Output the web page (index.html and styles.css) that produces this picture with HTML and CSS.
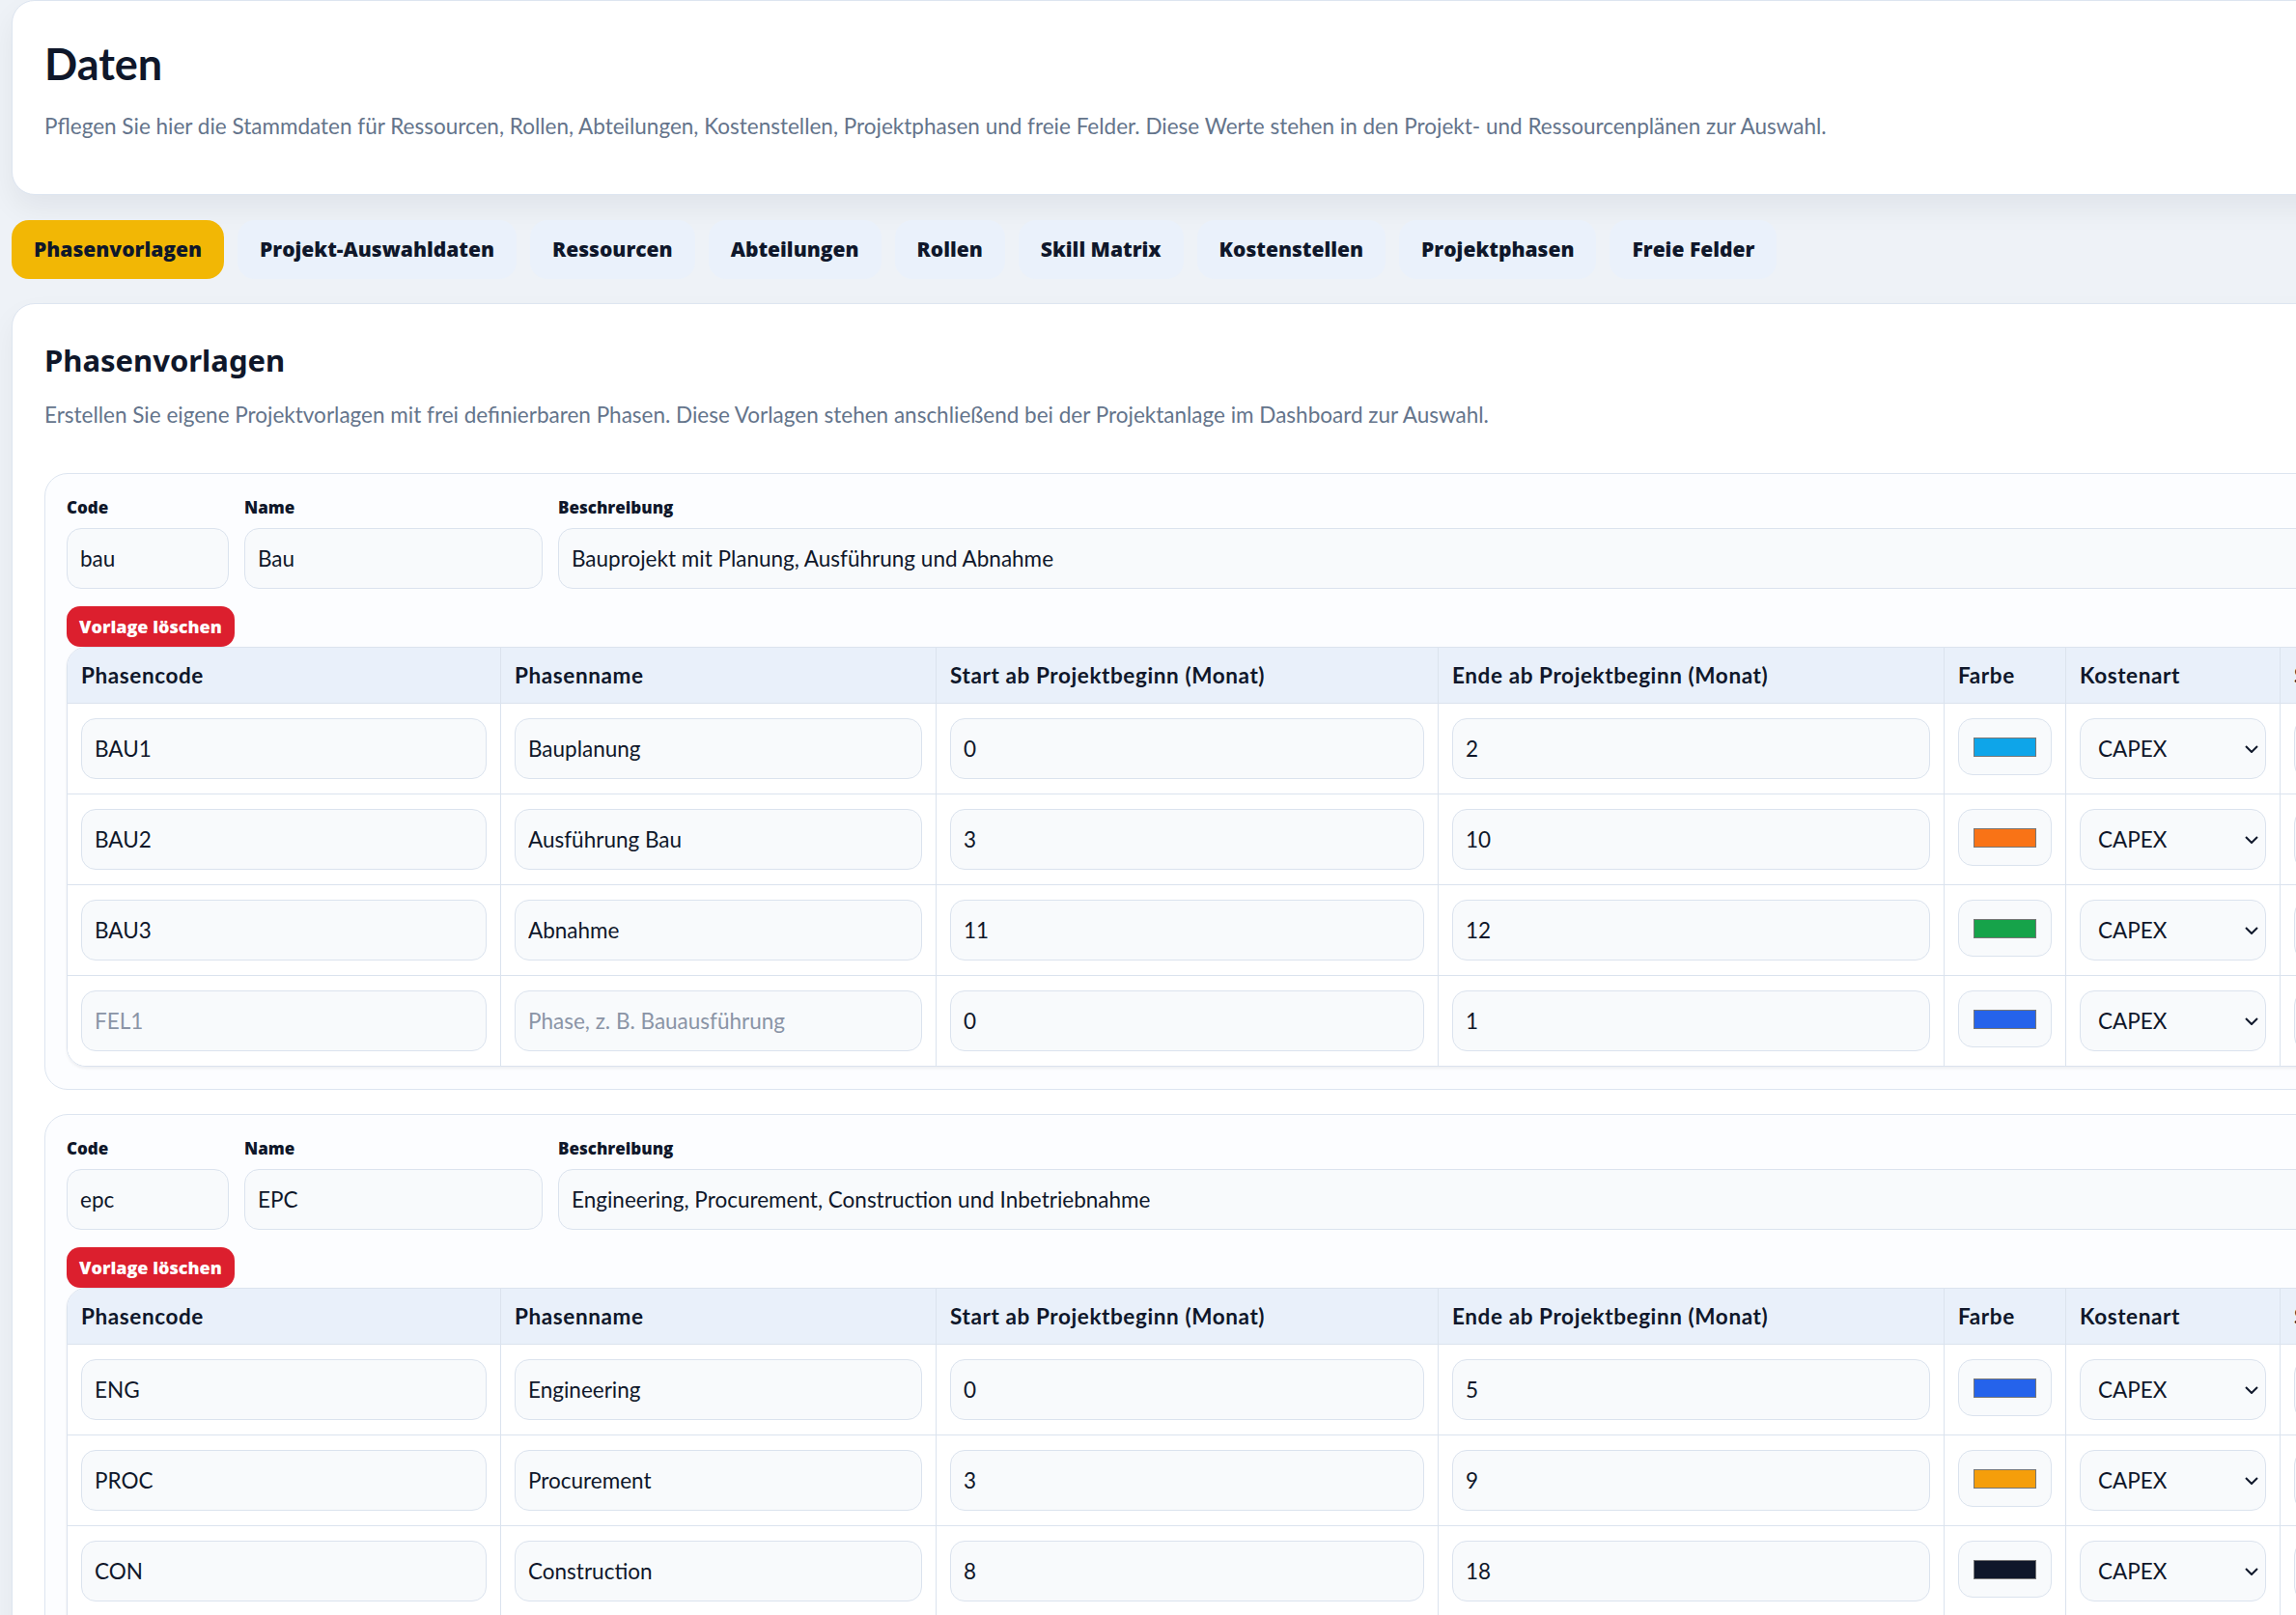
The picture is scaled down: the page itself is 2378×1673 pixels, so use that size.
FILE: index.html
```html
<!DOCTYPE html>
<html lang="de">
<head>
  <meta charset="UTF-8" />
  <meta name="viewport" content="width=device-width, initial-scale=1.0" />
  <title>Daten</title>
  <link rel="stylesheet" href="styles.css">
</head>
<body>
  <div class="page">
    <header class="intro">
      <h1>Daten</h1>
      <p>Pflegen Sie hier die Stammdaten für Ressourcen, Rollen, Abteilungen, Kostenstellen, Projektphasen und freie Felder. Diese Werte stehen in den Projekt- und Ressourcenplänen zur Auswahl.</p>
    </header>

    <nav class="tabs">
      <button type="button" class="tab active">Phasenvorlagen</button>
      <button type="button" class="tab">Projekt-Auswahldaten</button>
      <button type="button" class="tab">Ressourcen</button>
      <button type="button" class="tab">Abteilungen</button>
      <button type="button" class="tab">Rollen</button>
      <button type="button" class="tab">Skill Matrix</button>
      <button type="button" class="tab">Kostenstellen</button>
      <button type="button" class="tab">Projektphasen</button>
      <button type="button" class="tab">Freie Felder</button>
    </nav>

    <main class="panel">
      <h2>Phasenvorlagen</h2>
      <p class="lead">Erstellen Sie eigene Projektvorlagen mit frei definierbaren Phasen. Diese Vorlagen stehen anschließend bei der Projektanlage im Dashboard zur Auswahl.</p>

      <!-- Vorlage: Bau -->
      <section class="template">
        <div class="meta">
          <label class="field"><span>Code</span><input type="text" value="bau" /></label>
          <label class="field"><span>Name</span><input type="text" value="Bau" /></label>
          <label class="field"><span>Beschreibung</span><input type="text" value="Bauprojekt mit Planung, Ausführung und Abnahme" /></label>
        </div>
        <button type="button" class="btn-danger">Vorlage löschen</button>
        <table class="phases">
          <colgroup>
            <col class="c-code"><col class="c-name"><col class="c-start"><col class="c-end">
            <col class="c-color"><col class="c-cost"><col class="c-status"><col class="c-action">
          </colgroup>
          <thead>
            <tr>
              <th>Phasencode</th><th>Phasenname</th><th>Start ab Projektbeginn (Monat)</th><th>Ende ab Projektbeginn (Monat)</th>
              <th>Farbe</th><th>Kostenart</th><th>Status</th><th>Aktion</th>
            </tr>
          </thead>
          <tbody>
            <tr>
              <td><input type="text" value="BAU1" /></td>
              <td><input type="text" value="Bauplanung" /></td>
              <td><input type="number" value="0" /></td>
              <td><input type="number" value="2" /></td>
              <td><input type="color" class="swatch" value="#0ea5e9" /></td>
              <td><div class="select"><select><option>CAPEX</option><option>OPEX</option></select><svg viewBox="0 0 14 8"><path d="M1 1l6 6 6-6" /></svg></div></td>
              <td><div class="select"><select><option>Aktiv</option><option>Inaktiv</option></select><svg viewBox="0 0 14 8"><path d="M1 1l6 6 6-6" /></svg></div></td>
              <td><button type="button" class="btn-row">Entfernen</button></td>
            </tr>
            <tr>
              <td><input type="text" value="BAU2" /></td>
              <td><input type="text" value="Ausführung Bau" /></td>
              <td><input type="number" value="3" /></td>
              <td><input type="number" value="10" /></td>
              <td><input type="color" class="swatch" value="#f97316" /></td>
              <td><div class="select"><select><option>CAPEX</option><option>OPEX</option></select><svg viewBox="0 0 14 8"><path d="M1 1l6 6 6-6" /></svg></div></td>
              <td><div class="select"><select><option>Aktiv</option><option>Inaktiv</option></select><svg viewBox="0 0 14 8"><path d="M1 1l6 6 6-6" /></svg></div></td>
              <td><button type="button" class="btn-row">Entfernen</button></td>
            </tr>
            <tr>
              <td><input type="text" value="BAU3" /></td>
              <td><input type="text" value="Abnahme" /></td>
              <td><input type="number" value="11" /></td>
              <td><input type="number" value="12" /></td>
              <td><input type="color" class="swatch" value="#16a34a" /></td>
              <td><div class="select"><select><option>CAPEX</option><option>OPEX</option></select><svg viewBox="0 0 14 8"><path d="M1 1l6 6 6-6" /></svg></div></td>
              <td><div class="select"><select><option>Aktiv</option><option>Inaktiv</option></select><svg viewBox="0 0 14 8"><path d="M1 1l6 6 6-6" /></svg></div></td>
              <td><button type="button" class="btn-row">Entfernen</button></td>
            </tr>
            <tr>
              <td><input type="text" placeholder="FEL1" /></td>
              <td><input type="text" placeholder="Phase, z. B. Bauausführung" /></td>
              <td><input type="number" value="0" /></td>
              <td><input type="number" value="1" /></td>
              <td><input type="color" class="swatch" value="#2563eb" /></td>
              <td><div class="select"><select><option>CAPEX</option><option>OPEX</option></select><svg viewBox="0 0 14 8"><path d="M1 1l6 6 6-6" /></svg></div></td>
              <td><div class="select"><select><option>Aktiv</option><option>Inaktiv</option></select><svg viewBox="0 0 14 8"><path d="M1 1l6 6 6-6" /></svg></div></td>
              <td><button type="button" class="btn-row">Hinzufügen</button></td>
            </tr>
          </tbody>
        </table>
      </section>

      <!-- Vorlage: EPC -->
      <section class="template">
        <div class="meta">
          <label class="field"><span>Code</span><input type="text" value="epc" /></label>
          <label class="field"><span>Name</span><input type="text" value="EPC" /></label>
          <label class="field"><span>Beschreibung</span><input type="text" value="Engineering, Procurement, Construction und Inbetriebnahme" /></label>
        </div>
        <button type="button" class="btn-danger">Vorlage löschen</button>
        <table class="phases">
          <colgroup>
            <col class="c-code"><col class="c-name"><col class="c-start"><col class="c-end">
            <col class="c-color"><col class="c-cost"><col class="c-status"><col class="c-action">
          </colgroup>
          <thead>
            <tr>
              <th>Phasencode</th><th>Phasenname</th><th>Start ab Projektbeginn (Monat)</th><th>Ende ab Projektbeginn (Monat)</th>
              <th>Farbe</th><th>Kostenart</th><th>Status</th><th>Aktion</th>
            </tr>
          </thead>
          <tbody>
            <tr>
              <td><input type="text" value="ENG" /></td>
              <td><input type="text" value="Engineering" /></td>
              <td><input type="number" value="0" /></td>
              <td><input type="number" value="5" /></td>
              <td><input type="color" class="swatch" value="#2563eb" /></td>
              <td><div class="select"><select><option>CAPEX</option><option>OPEX</option></select><svg viewBox="0 0 14 8"><path d="M1 1l6 6 6-6" /></svg></div></td>
              <td><div class="select"><select><option>Aktiv</option><option>Inaktiv</option></select><svg viewBox="0 0 14 8"><path d="M1 1l6 6 6-6" /></svg></div></td>
              <td><button type="button" class="btn-row">Entfernen</button></td>
            </tr>
            <tr>
              <td><input type="text" value="PROC" /></td>
              <td><input type="text" value="Procurement" /></td>
              <td><input type="number" value="3" /></td>
              <td><input type="number" value="9" /></td>
              <td><input type="color" class="swatch" value="#f59e0b" /></td>
              <td><div class="select"><select><option>CAPEX</option><option>OPEX</option></select><svg viewBox="0 0 14 8"><path d="M1 1l6 6 6-6" /></svg></div></td>
              <td><div class="select"><select><option>Aktiv</option><option>Inaktiv</option></select><svg viewBox="0 0 14 8"><path d="M1 1l6 6 6-6" /></svg></div></td>
              <td><button type="button" class="btn-row">Entfernen</button></td>
            </tr>
            <tr>
              <td><input type="text" value="CON" /></td>
              <td><input type="text" value="Construction" /></td>
              <td><input type="number" value="8" /></td>
              <td><input type="number" value="18" /></td>
              <td><input type="color" class="swatch" value="#0f172a" /></td>
              <td><div class="select"><select><option>CAPEX</option><option>OPEX</option></select><svg viewBox="0 0 14 8"><path d="M1 1l6 6 6-6" /></svg></div></td>
              <td><div class="select"><select><option>Aktiv</option><option>Inaktiv</option></select><svg viewBox="0 0 14 8"><path d="M1 1l6 6 6-6" /></svg></div></td>
              <td><button type="button" class="btn-row">Entfernen</button></td>
            </tr>
            <tr>
              <td><input type="text" value="COM" /></td>
              <td><input type="text" value="Inbetriebnahme" /></td>
              <td><input type="number" value="19" /></td>
              <td><input type="number" value="20" /></td>
              <td><input type="color" class="swatch" value="#16a34a" /></td>
              <td><div class="select"><select><option>CAPEX</option><option>OPEX</option></select><svg viewBox="0 0 14 8"><path d="M1 1l6 6 6-6" /></svg></div></td>
              <td><div class="select"><select><option>Aktiv</option><option>Inaktiv</option></select><svg viewBox="0 0 14 8"><path d="M1 1l6 6 6-6" /></svg></div></td>
              <td><button type="button" class="btn-row">Entfernen</button></td>
            </tr>
          </tbody>
        </table>
      </section>
    </main>
  </div>
</body>
</html>
```

FILE: styles.css
```css
:root {
  --ink: #0f172a;
  --muted: #64748b;
  --line: #dbe3ee;
  --card-line: #dde5f0;
  --field-bg: #f8fafc;
  --head-bg: #e9f0fa;
  --tab-bg: #eaf1fb;
  --accent: #f2b705;
  --danger: #dc1f2e;
  --page-bg: #eef2f7;
  --heavy: "Open Sans", "Noto Sans", sans-serif;
}

* {
  box-sizing: border-box;
}

html {
  overflow: hidden;
}

body {
  margin: 0;
  background: var(--page-bg);
  color: var(--ink);
  font-family: Lato, "Noto Sans", sans-serif;
}

.page {
  min-width: max-content;
  padding: 0 12px 40px;
}

/* Kopfbereich */
.intro {
  background: #fff;
  border: 1px solid var(--card-line);
  border-radius: 24px;
  padding: 38px 33px 53px;
  box-shadow: 0 14px 30px rgba(15, 23, 42, 0.06);
}

.intro h1 {
  margin: 0;
  font-size: 45px;
  line-height: 54px;
  font-weight: 700;
}

.intro p {
  margin: 21px 0 0;
  font-size: 22.5px;
  line-height: 34px;
  color: var(--muted);
}

/* Tabs */
.tabs {
  display: flex;
  gap: 14px;
  margin: 26px 0 25px;
}

.tab {
  font-family: var(--heavy);
  font-size: 21px;
  line-height: 31px;
  font-weight: 800;
  color: var(--ink);
  background: var(--tab-bg);
  border: 0;
  border-radius: 18px;
  padding: 15px 23px;
  cursor: pointer;
}

.tab.active {
  background: var(--accent);
}

/* Inhalt */
.panel {
  background: #fff;
  border: 1px solid var(--card-line);
  border-radius: 24px;
  padding: 39px 33px 40px;
  box-shadow: 0 14px 30px rgba(15, 23, 42, 0.05);
}

.panel h2 {
  margin: 0;
  font-family: "Noto Sans", sans-serif;
  font-size: 31px;
  line-height: 38px;
  font-weight: 700;
}

.lead {
  margin: 21px 0 43px;
  font-size: 22.5px;
  line-height: 34px;
  color: var(--muted);
}

.template {
  background: #fcfdff;
  border: 1px solid var(--card-line);
  border-radius: 24px;
  padding: 23px 22px;
}

.template + .template {
  margin-top: 25px;
}

.meta {
  display: grid;
  grid-template-columns: 168px 309px 1fr;
  gap: 16px;
}

.field span {
  display: block;
  font-family: var(--heavy);
  font-size: 17px;
  line-height: 23px;
  font-weight: 800;
  margin-bottom: 10px;
}

input,
select {
  width: 100%;
  font-family: inherit;
  font-size: 22.5px;
  line-height: 31px;
  color: var(--ink);
  background: var(--field-bg);
  border: 1px solid var(--line);
  border-radius: 15px;
  padding: 15px 13px;
  outline: none;
}

input::placeholder {
  color: #8a94a6;
}

input[type="number"]::-webkit-inner-spin-button {
  display: none;
}

.btn-danger {
  display: block;
  margin-top: 18px;
  font-family: var(--heavy);
  font-size: 18px;
  line-height: 24px;
  font-weight: 800;
  color: #fff;
  background: var(--danger);
  border: 0;
  border-radius: 14px;
  padding: 9px 13px;
  cursor: pointer;
}

/* Phasentabelle */
.phases {
  width: 2691px;
  table-layout: fixed;
  border-collapse: separate;
  border-spacing: 0;
  border: 1px solid var(--line);
  border-radius: 20px;
  box-shadow: 0 2px 3px rgba(15, 23, 42, 0.06);
}

.c-code { width: 448px; }
.c-name { width: 451px; }
.c-start { width: 520px; }
.c-end { width: 524px; }
.c-color { width: 126px; }
.c-cost { width: 222px; }
.c-status { width: 260px; }
.c-action { width: 140px; }

.phases th {
  text-align: left;
  font-size: 22.5px;
  line-height: 33px;
  font-weight: 700;
  letter-spacing: 0.6px;
  background: var(--head-bg);
  padding: 12px 14px;
  border-bottom: 1px solid var(--line);
  white-space: nowrap;
}

.phases th:first-child {
  border-top-left-radius: 19px;
}

.phases th:last-child {
  border-top-right-radius: 19px;
}

.phases th + th,
.phases td + td {
  border-left: 1px solid var(--line);
}

.phases td {
  padding: 15px 14px;
  vertical-align: top;
  background: #fff;
}

.phases tr + tr td {
  border-top: 1px solid var(--line);
}

.phases tbody tr:last-child td:first-child {
  border-bottom-left-radius: 19px;
}

.phases tbody tr:last-child td:last-child {
  border-bottom-right-radius: 19px;
}

.swatch {
  -webkit-appearance: none;
  appearance: none;
  width: 97px;
  height: 59px;
  padding: 19px 15px 18px;
  cursor: pointer;
}

.swatch::-webkit-color-swatch-wrapper {
  padding: 0;
}

.swatch::-webkit-color-swatch {
  border: 1px solid #767676;
  border-radius: 0;
}

.select {
  position: relative;
}

.select select {
  -webkit-appearance: none;
  appearance: none;
  padding-left: 18px;
  padding-right: 30px;
  cursor: pointer;
}

.select svg {
  position: absolute;
  right: 8px;
  top: 28px;
  width: 14px;
  height: 8px;
  fill: none;
  stroke: var(--ink);
  stroke-width: 2;
  pointer-events: none;
}

.btn-row {
  font-family: var(--heavy);
  font-size: 16px;
  font-weight: 700;
  color: #fff;
  background: var(--danger);
  border: 0;
  border-radius: 12px;
  padding: 10px 12px;
}
```
